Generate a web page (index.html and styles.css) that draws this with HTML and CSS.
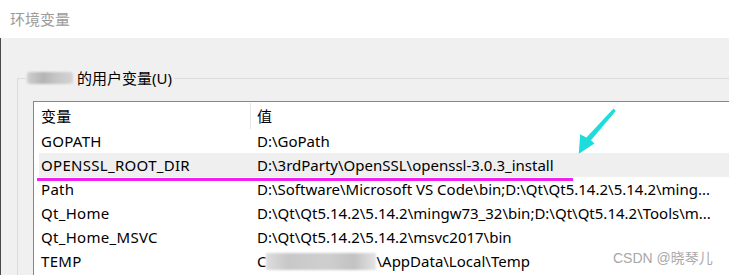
FILE: index.html
```html
<!DOCTYPE html>
<html lang="zh-CN">
<head>
  <meta charset="UTF-8" />
  <title>环境变量</title>
  <link rel="stylesheet" href="styles.css">
</head>
<body>
  <div class="window">
    <div class="titlebar">环境变量</div>
    <div class="content">
      <div class="group">
        <div class="group-label"><span class="blur-name"></span>的用户变量(U)</div>
        <div class="listbox">
          <div class="row head">
            <div class="cell name">变量</div>
            <div class="cell value">值</div>
          </div>
          <div class="row">
            <div class="cell name">GOPATH</div>
            <div class="cell value">D:\GoPath</div>
          </div>
          <div class="row selected">
            <div class="cell name">OPENSSL_ROOT_DIR</div>
            <div class="cell value">D:\3rdParty\OpenSSL\openssl-3.0.3_install</div>
          </div>
          <div class="row">
            <div class="cell name">Path</div>
            <div class="cell value">D:\Software\Microsoft VS Code\bin;D:\Qt\Qt5.14.2\5.14.2\ming...</div>
          </div>
          <div class="row">
            <div class="cell name">Qt_Home</div>
            <div class="cell value">D:\Qt\Qt5.14.2\5.14.2\mingw73_32\bin;D:\Qt\Qt5.14.2\Tools\m...</div>
          </div>
          <div class="row">
            <div class="cell name">Qt_Home_MSVC</div>
            <div class="cell value">D:\Qt\Qt5.14.2\5.14.2\msvc2017\bin</div>
          </div>
          <div class="row">
            <div class="cell name">TEMP</div>
            <div class="cell value">C<span class="blur-path"></span>\AppData\Local\Temp</div>
          </div>
        </div>
      </div>
    </div>
  </div>

  <!-- 标注 -->
  <div class="mark-line"></div>
  <svg class="mark-arrow" width="729" height="275" viewBox="0 0 729 275">
    <polygon points="613.5,108.5 615.8,111 591,140.2 594.5,143.6 578.8,153.8 580.2,134.2 586.4,137.4" fill="#1edcdc" />
  </svg>
  <div class="watermark">CSDN @晓琴儿</div>
</body>
</html>
```

FILE: styles.css
```css
* {
  box-sizing: border-box;
}
body {
  margin: 0;
  width: 729px;
  height: 275px;
  overflow: hidden;
  position: relative;
  font-family: "Noto Sans", "Noto Sans CJK SC", sans-serif;
  font-size: 15px;
  color: #000;
  background: #f0f0f0;
}
.window {
  height: 275px;
  display: flex;
  flex-direction: column;
}
.titlebar {
  height: 38px;
  flex: none;
  background: #fff;
  color: #9b9b9b;
  padding-left: 10px;
  line-height: 37px;
  font-size: 15px;
  border-top: 1px solid #fff;
}
.content {
  flex: 1;
  background: #f0f0f0;
  border-left: 1px solid #4a4a4a;
  padding: 40px 0 0 16px;
  overflow: hidden;
}
.group {
  position: relative;
  border-top: 1px solid #dcdcdc;
  border-left: 1px solid #dcdcdc;
  padding: 22px 0 0 15px;
  height: 300px;
}
.group-label {
  position: absolute;
  top: -10px;
  left: 8px;
  padding: 0 2px 0 1px;
  background: #f0f0f0;
  line-height: 18px;
  font-size: 15px;
  display: flex;
  align-items: center;
}
.blur-name {
  display: inline-block;
  width: 46px;
  height: 12px;
  margin-right: 4px;
  border-radius: 3px;
  background: linear-gradient(90deg, #cfcfcf 0%, #b4b4b4 35%, #c4c4c4 60%, #d4d4d4 100%);
  filter: blur(1px);
}
.listbox {
  background: #fff;
  border: 1px solid #828790;
  border-right: none;
  padding: 1px 0 0 5px;
  width: 760px;
  height: 300px;
}
.row {
  display: grid;
  grid-template-columns: 212px 1fr;
  height: 24px;
  line-height: 24px;
  white-space: nowrap;
}
.row.head {
  height: 26px;
  line-height: 26px;
}
.row.head .name {
  border-right: 1px solid #e5e5e5;
}
.row.selected {
  background: #efefef;
}
.cell {
  overflow: hidden;
}
.cell.name {
  padding-left: 2px;
  letter-spacing: 0.3px;
}
.cell.value {
  padding-left: 6px;
}
.blur-path {
  display: inline-block;
  width: 110px;
  height: 17px;
  vertical-align: -3px;
  background: linear-gradient(90deg, #dedede 0%, #c8c8c8 20%, #cfcfcf 55%, #c2c2c2 80%, #e4e4e4 100%);
  filter: blur(1.2px);
}
.mark-line {
  position: absolute;
  left: 37px;
  top: 178px;
  width: 536px;
  height: 3px;
  background: #f020f0;
}
.mark-arrow {
  position: absolute;
  left: 0;
  top: 0;
  pointer-events: none;
}
.watermark {
  position: absolute;
  left: 613px;
  top: 249px;
  font-family: "Liberation Sans", "Noto Sans CJK SC", sans-serif;
  font-size: 14px;
  color: #a8a8a8;
  line-height: 18px;
}
```
